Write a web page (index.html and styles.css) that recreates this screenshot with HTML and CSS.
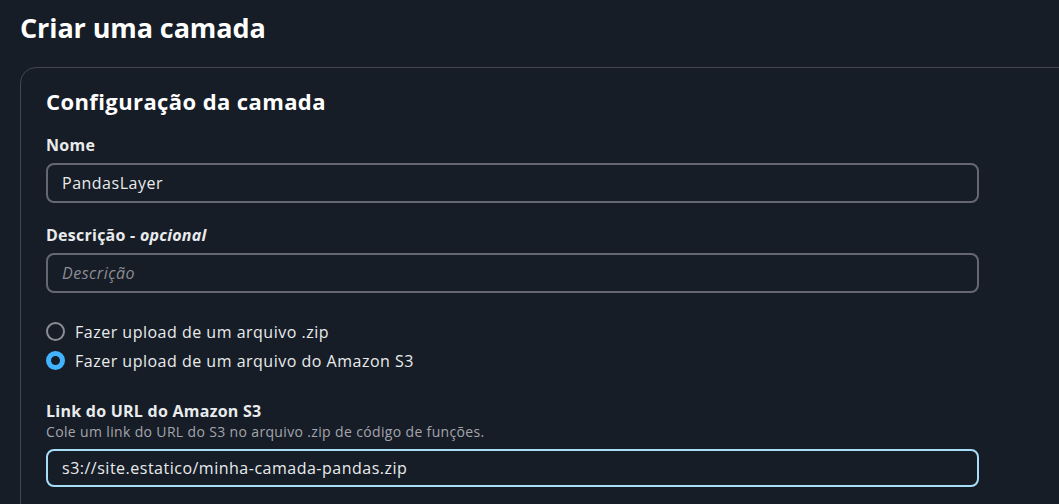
FILE: index.html
```html
<!DOCTYPE html>
<html lang="pt">
<head>
<meta charset="utf-8">
<title>Criar uma camada</title>
<link rel="stylesheet" href="styles.css">
</head>
<body>
<main class="page">
  <h1 class="page-title">Criar uma camada</h1>
  <section class="card">
    <h2 class="card-title">Configuração da camada</h2>
    <div class="field field-first">
      <label class="label">Nome</label>
      <div class="input">PandasLayer</div>
    </div>
    <div class="field">
      <label class="label">Descrição - <em>opcional</em></label>
      <div class="input placeholder">Descrição</div>
    </div>
    <div class="radios">
      <div class="radio-row"><span class="radio"></span><span>Fazer upload de um arquivo .zip</span></div>
      <div class="radio-row"><span class="radio checked"></span><span>Fazer upload de um arquivo do Amazon S3</span></div>
    </div>
    <div class="field field-s3">
      <label class="label">Link do URL do Amazon S3</label>
      <div class="desc">Cole um link do URL do S3 no arquivo .zip de código de funções.</div>
      <div class="input focused">s3://site.estatico/minha-camada-pandas.zip</div>
    </div>
  </section>
</main>
</body>
</html>
```

FILE: styles.css
```css
html, body {
  margin: 0;
  padding: 0;
  background: #161d26;
  overflow: hidden;
}
body {
  font-family: "Open Sans", "Noto Sans", sans-serif;
  color: #e9ebed;
}
.page {
  padding: 0 0 0 20px;
}
.page-title {
  margin: 0;
  padding-top: 8px;
  font-size: 27px;
  line-height: 40px;
  font-weight: 700;
  color: #ffffff;
  letter-spacing: -0.1px;
}
.card {
  margin-top: 19px;
  width: 1100px;
  border: 1px solid #424650;
  border-radius: 16px;
  padding: 20px 25px 40px;
  box-sizing: border-box;
}
.card-title {
  margin: 0;
  font-size: 22px;
  line-height: 26px;
  font-weight: 700;
  color: #ffffff;
  letter-spacing: 0.4px;
}
.field {
  display: flex;
  flex-direction: column;
  width: 933px;
  margin-top: 21px;
}
.field-first { margin-top: 20px; }
.label {
  font-size: 16px;
  line-height: 22px;
  font-weight: 700;
  color: #e9ebed;
  margin-bottom: 7px;
  letter-spacing: 0.25px;
}
.label em {
  font-style: italic;
}
.input {
  box-sizing: border-box;
  height: 40px;
  border: 2px solid #656871;
  border-radius: 8px;
  background: #161d26;
  padding: 0 14px;
  font-size: 16px;
  line-height: 36px;
  color: #e9ebed;
  letter-spacing: 0.5px;
}
.input.placeholder {
  font-style: italic;
  color: #8c8c94;
}
.input.focused {
  border-color: #a6def8;
  height: 38px;
  line-height: 34px;
}
.radios {
  margin-top: 24px;
  display: flex;
  flex-direction: column;
}
.radio-row {
  display: flex;
  align-items: center;
  gap: 10px;
  height: 29px;
  font-size: 16px;
  color: #e9ebed;
  letter-spacing: 0.5px;
}
.radio {
  box-sizing: border-box;
  width: 19px;
  height: 19px;
  border-radius: 50%;
  border: 2px solid #8c8c94;
}
.radio.checked {
  border: 5.5px solid #42b4ff;
  background: #161d26;
}
.field-s3 {
  margin-top: 25px;
}
.field-s3 .label {
  margin-bottom: 0;
}
.desc {
  font-size: 14px;
  line-height: 20px;
  color: #a4a4ad;
  margin-bottom: 7px;
  letter-spacing: 0.35px;
}
```
